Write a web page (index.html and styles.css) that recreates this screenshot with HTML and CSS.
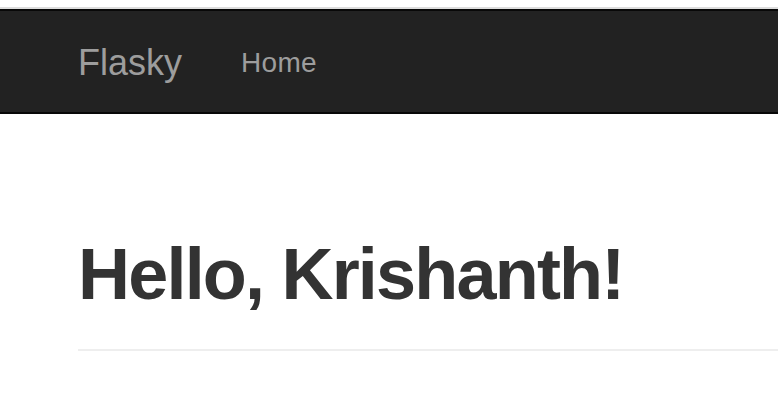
FILE: index.html
```html
<!DOCTYPE html>
<html lang="en">
<head>
<meta charset="utf-8">
<title>Flasky</title>
<link rel="stylesheet" href="styles.css">
</head>
<body>
<div class="chrome-edge"></div>
<nav class="navbar">
  <a class="brand" href="#">Flasky</a>
  <ul class="nav">
    <li><a href="#">Home</a></li>
  </ul>
</nav>
<main class="container">
  <div class="page-header">
    <h1>Hello, Krishanth!</h1>
  </div>
</main>
</body>
</html>
```

FILE: styles.css
```css
html, body {
  margin: 0;
  padding: 0;
  background: #fff;
  font-family: "Liberation Sans", Arial, sans-serif;
}

body {
  padding-top: 7px;
}

.chrome-edge {
  height: 2px;
  background: #dddddd;
}

.navbar {
  display: flex;
  align-items: center;
  gap: 59px;
  height: 101px;
  padding-left: 78px;
  background: #222222;
  border-top: 2px solid #080808;
  border-bottom: 2px solid #080808;
}

.brand {
  color: #9d9d9d;
  font-size: 36px;
  line-height: 40px;
  text-decoration: none;
  padding-top: 2px;
}

.nav {
  list-style: none;
  margin: 0;
  padding: 0;
  display: flex;
}

.nav a {
  color: #9d9d9d;
  font-size: 28px;
  line-height: 40px;
  letter-spacing: 0.3px;
  text-decoration: none;
  display: block;
  padding-top: 2px;
}

.container {
  padding-left: 78px;
}

.page-header {
  margin-top: 121px;
  padding-bottom: 35px;
  border-bottom: 2px solid #eeeeee;
}

.page-header h1 {
  margin: 0;
  font-size: 72px;
  line-height: 1.1;
  font-weight: 700;
  letter-spacing: -1.8px;
  color: #333333;
}
```
